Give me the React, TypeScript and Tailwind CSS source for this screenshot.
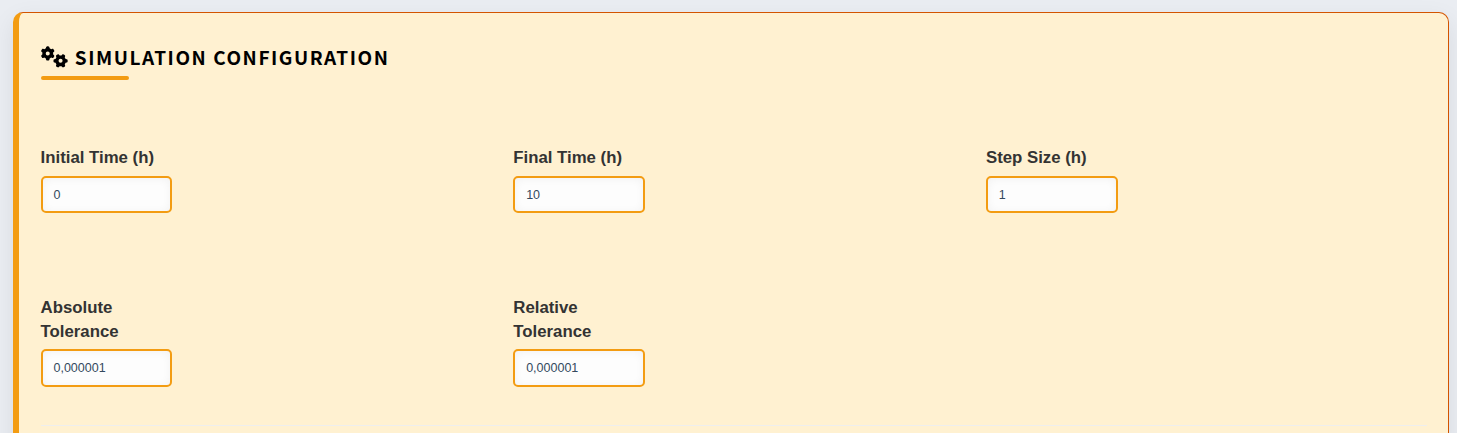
import { FaGears } from "react-icons/fa6";

type FieldProps = { label: string; value: string };

function Field({ label, value }: FieldProps) {
  return (
    <label className="flex w-[131.7px] flex-col">
      <span className="mb-[5.8px] text-[16.8px] leading-[24px] font-bold text-[#333333]">{label}</span>
      <input
        type="text"
        defaultValue={value}
        className="h-[37.4px] w-full rounded-[5px] border-2 border-[#f39c12] bg-[#fdfdfd] px-[10.9px] pt-[0.6px] text-[12.5px] text-[#34495e] shadow-[inset_0_1px_8px_rgba(0,0,0,0.05)] outline-none"
      />
    </label>
  );
}

export default function App() {
  return (
    <div className="h-[433px] overflow-hidden bg-[#eaedf2] pt-3 pr-2 pl-[13px] font-['Liberation_Sans',Arial,sans-serif]">
      <section className="h-[520px] rounded-[10px] border border-l-[6px] border-[#d35400] border-l-[#f39c12] bg-[#fff1d1] pt-[26px] pr-[21.4px] pl-[21.6px] shadow-[0_8px_25px_rgba(0,0,0,0.08)]">
        <h2 className="flex h-[37px] items-center gap-[7.2px] text-[19px] font-bold tracking-[1.54px] text-black uppercase font-['Noto_Sans_CJK_SC',sans-serif]">
          <FaGears className="-mt-px h-[21.6px] w-[27px]" />
          <span>Simulation Configuration</span>
        </h2>
        <div className="h-1 w-[88px] rounded-[2px] bg-[#f39c12]" />
        <div className="mt-[65.9px] grid grid-cols-3 gap-x-8">
          <Field label="Initial Time (h)" value="0" />
          <Field label="Final Time (h)" value="10" />
          <Field label="Step Size (h)" value="1" />
        </div>
        <div className="mt-[82.5px] grid grid-cols-3 gap-x-8">
          <Field label="Absolute Tolerance" value="0,000001" />
          <Field label="Relative Tolerance" value="0,000001" />
        </div>
        <hr className="mt-[38.3px] border-t border-[#eeeeee]" />
      </section>
    </div>
  );
}
